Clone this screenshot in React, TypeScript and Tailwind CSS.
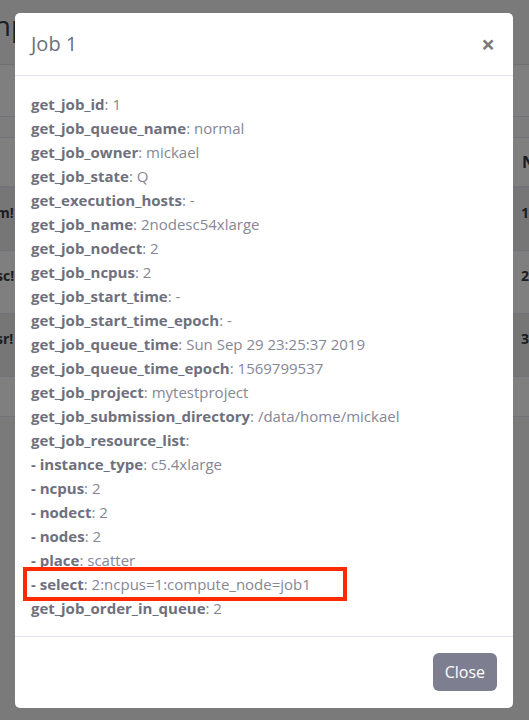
import React from "react";

const fields: { label: string; value: string; boxed?: boolean }[] = [
  { label: "get_job_id", value: "1" },
  { label: "get_job_queue_name", value: "normal" },
  { label: "get_job_owner", value: "mickael" },
  { label: "get_job_state", value: "Q" },
  { label: "get_execution_hosts", value: "-" },
  { label: "get_job_name", value: "2nodesc54xlarge" },
  { label: "get_job_nodect", value: "2" },
  { label: "get_job_ncpus", value: "2" },
  { label: "get_job_start_time", value: "-" },
  { label: "get_job_start_time_epoch", value: "-" },
  { label: "get_job_queue_time", value: "Sun Sep 29 23:25:37 2019" },
  { label: "get_job_queue_time_epoch", value: "1569799537" },
  { label: "get_job_project", value: "mytestproject" },
  { label: "get_job_submission_directory", value: "/data/home/mickael" },
  { label: "get_job_resource_list", value: "" },
  { label: "- instance_type", value: "c5.4xlarge" },
  { label: "- ncpus", value: "2" },
  { label: "- nodect", value: "2" },
  { label: "- nodes", value: "2" },
  { label: "- place", value: "scatter" },
  { label: "- select", value: "2:ncpus=1:compute_node=job1", boxed: true },
  { label: "get_job_order_in_queue", value: "2" },
];

const rows = [
  { left: "m!", right: "1", striped: true },
  { left: "sc!", right: "2", striped: false },
  { left: "sr!", right: "3", striped: true },
];

export default function App() {
  return (
    <div className="relative h-[720px] overflow-hidden bg-[#f4f4f6] font-['Open_Sans','Lato',sans-serif]">
      {/* page behind the modal */}
      <div className="flex flex-col">
        <div className="h-[65px] flex items-start pt-[4px] border-b border-[#dddfe6]">
          <h1 className="-ml-[14px] text-[28px] text-[#3a3b45]">Inputs</h1>
        </div>
        <div className="h-[52px] bg-white border-b border-[#e3e6f0]" />
        <div className="h-[21px] bg-[#fafafa] border-b border-[#e3e6f0]" />
        <div className="h-[50px] bg-white border-b-2 border-[#e3e6f0] flex items-center justify-end">
          <span className="font-bold text-[16px] text-[#3a3b45] w-[7px] overflow-hidden">N</span>
        </div>
        {rows.map((r) => (
          <div
            key={r.right}
            className={`h-[63px] border-b border-[#e3e6f0] flex items-start justify-between pt-[14px] font-bold text-[14px] text-[#3a3b45] ${
              r.striped ? "bg-[#ececec]" : "bg-white"
            }`}
          >
            <span className="-ml-[4px]">{r.left}</span>
            <span className="w-[8px] overflow-hidden">{r.right}</span>
          </div>
        ))}
        <div className="h-[40px] bg-white border-b border-[#e3e6f0]" />
      </div>

      {/* backdrop */}
      <div className="fixed inset-0 bg-black/50" />

      {/* modal */}
      <div className="fixed left-[15px] top-[13px] w-[498px] rounded-[5px] bg-white">
        <div className="flex h-[63px] items-center justify-between border-b border-[#e3e6f0] px-4">
          <h5 className="text-[20px] text-[#6e707e]">Job 1</h5>
          <button className="text-[24px] font-bold leading-none text-[#7b7b7b] pr-[2px]">×</button>
        </div>
        <div className="p-4 text-[15px] leading-6 text-[#858796]">
          {fields.map((f) => (
            <div key={f.label + f.value} className="relative">
              {f.boxed && (
                <span className="absolute left-[-8px] top-[-5px] h-[34px] w-[324px] border-[4px] border-[#ff2a00]" />
              )}
              <span className="font-bold text-[#6e707e]">{f.label}</span>:{f.value ? " " + f.value : ""}
            </div>
          ))}
        </div>
        <div className="flex justify-end border-t border-[#e3e6f0] px-4 pt-4 pb-[17px]">
          <button className="h-[38px] rounded-[6px] bg-[#7d7e8f] px-[12px] text-[16px] text-white">
            Close
          </button>
        </div>
      </div>
    </div>
  );
}
